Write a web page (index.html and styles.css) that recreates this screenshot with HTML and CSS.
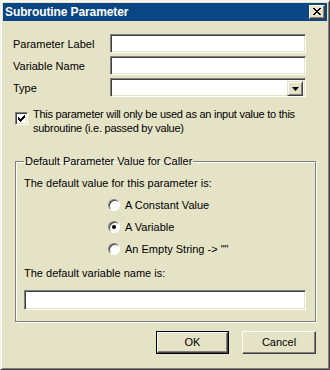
FILE: index.html
```html
<!DOCTYPE html>
<html>
<head>
<meta charset="utf-8">
<link rel="stylesheet" href="styles.css">
</head>
<body>
<div class="window">
  <div class="titlebar">
    <span class="title">Subroutine Parameter</span>
    <span class="close">
      <svg width="8" height="7" viewBox="0 0 8 7"><path d="M0 0h2v1h1v1h2V1h1V0h2v1H7v1H6v1H5v1h1v1h1v1h1v1H6V6H5V5H3v1H2v1H0V6h1V5h1V4h1V3H2V2H1V1H0z" fill="#000"/></svg>
    </span>
  </div>
  <div class="content">
    <div class="form">
      <label class="lbl">Parameter Label</label>
      <div class="field"></div>
      <label class="lbl">Variable Name</label>
      <div class="field"></div>
      <label class="lbl">Type</label>
      <div class="field select">
        <span class="dropbtn">
          <svg width="7" height="4" viewBox="0 0 7 4"><path d="M0 0h7L3.5 4z" fill="#000"/></svg>
        </span>
      </div>
    </div>
    <div class="checkrow">
      <span class="checkbox">
        <svg width="9" height="9" viewBox="0 0 9 9"><path d="M1 3h1v1h1v1h1V4h1V3h1V2h1V1h1v3H7v1H6v1H5v1H4v1H3V7H2V6H1z" fill="#000"/></svg>
      </span>
      <span class="checktext">This parameter will only be used as an input value to this<br>subroutine (i.e. passed by value)</span>
    </div>
    <fieldset class="group">
      <legend>Default Parameter Value for Caller</legend>
      <div class="line">The default value for this parameter is:</div>
      <div class="radios">
        <div class="radiorow"><span class="radio"></span><span>A Constant Value</span></div>
        <div class="radiorow"><span class="radio on"></span><span>A Variable</span></div>
        <div class="radiorow"><span class="radio"></span><span>An Empty String -&gt; ""</span></div>
      </div>
      <div class="line line2">The default variable name is:</div>
      <div class="field wide"></div>
    </fieldset>
    <div class="buttons">
      <span class="btn default"><span class="btninner">OK</span></span>
      <span class="btn"><span class="btninner">Cancel</span></span>
    </div>
  </div>
</div>
</body>
</html>
```
FILE: styles.css
```css
* { box-sizing: border-box; }
html, body { margin: 0; padding: 0; background: #e5e3c6; }
body {
  font-family: "Liberation Sans", Arial, sans-serif;
  font-size: 11px;
  line-height: 14px;
  color: #000;
}
.window {
  width: 330px;
  height: 370px;
  border: 1px solid;
  border-color: #f4f3e6 #404040 #404040 #f4f3e6;
  box-shadow: inset 1px 1px #ffffff, inset -1px -1px #808080;
  padding: 2px;
  background: #e5e3c6;
  display: flex;
  flex-direction: column;
}
.titlebar {
  height: 18px;
  background: #0a4684;
  display: flex;
  align-items: flex-start;
  justify-content: space-between;
  padding: 0 2px;
}
.title {
  color: #fff;
  font-family: "Liberation Sans", Arial, sans-serif;
  font-weight: bold;
  font-size: 12px;
  line-height: 18px;
  letter-spacing: -0.1px;
}
.close {
  margin-top: 2px;
  width: 16px;
  height: 14px;
  background: #e5e3c6;
  border: 1px solid;
  border-color: #ffffff #404040 #404040 #ffffff;
  box-shadow: inset -1px -1px #808080;
  display: flex;
  align-items: center;
  justify-content: center;
  padding-bottom: 1px;
}
.close svg { display: block; }
.content {
  padding: 13px 11px 0 10px;
  display: flex;
  flex-direction: column;
}
.form {
  display: grid;
  grid-template-columns: 97px 196px;
  grid-auto-rows: 19px;
  row-gap: 3px;
  align-items: center;
}
.field {
  height: 19px;
  background: #fff;
  border: 1px solid;
  border-color: #808080 #ffffff #ffffff #808080;
  box-shadow: inset 1px 1px #404040, inset -1px -1px #e5e3c6;
}
.select {
  display: flex;
  justify-content: flex-end;
  padding: 2px;
}
.dropbtn {
  width: 16px;
  height: 15px;
  background: #e5e3c6;
  border: 1px solid;
  border-color: #e5e3c6 #404040 #404040 #e5e3c6;
  box-shadow: inset 1px 1px #fff, inset -1px -1px #808080;
  display: flex;
  align-items: center;
  justify-content: center;
}
.dropbtn svg { display: block; }
.checkrow {
  display: flex;
  margin-top: 10px;
  margin-left: 2px;
  align-items: flex-start;
}
.checkbox {
  flex: none;
  width: 13px;
  height: 13px;
  margin-top: 5px;
  margin-right: 5px;
  background: #fff;
  border: 1px solid;
  border-color: #808080 #ffffff #ffffff #808080;
  box-shadow: inset 1px 1px #404040, inset -1px -1px #e5e3c6;
  display: flex;
  align-items: center;
  justify-content: center;
}
.checkbox svg { display: block; }
.checktext { white-space: nowrap; letter-spacing: -0.25px; }
.group {
  margin: 19px 0 0 2px;
  width: 301px;
  padding: 8px 8px 11px 8px;
  border: 1px solid #808080;
  box-shadow: inset 1px 1px #fff, 1px 1px #fff;
  min-width: 0;
}
.group legend {
  padding: 0 1px;
  margin-left: 0;
}
.line { line-height: 14px; }
.radios {
  margin-top: 4px;
  margin-left: 84px;
  display: flex;
  flex-direction: column;
}
.radiorow {
  height: 22px;
  display: flex;
  align-items: center;
  gap: 5px;
}
.radio {
  width: 12px;
  height: 12px;
  border-radius: 50%;
  background: #fff;
  border: 1px solid;
  border-color: #808080 #ffffff #ffffff #808080;
  box-shadow: inset 1px 1px #404040;
  display: flex;
  align-items: center;
  justify-content: center;
}
.radio.on::after {
  content: "";
  width: 4px;
  height: 4px;
  border-radius: 50%;
  background: #000;
}
.line2 { margin-top: 6px; }
.wide {
  width: 282px;
  height: 20px;
  margin-top: 10px;
}
.buttons {
  display: flex;
  justify-content: flex-end;
  gap: 13px;
  margin-top: 9px;
}
.btn {
  width: 74px;
  height: 23px;
  border: 1px solid;
  border-color: #ffffff #404040 #404040 #ffffff;
  box-shadow: inset -1px -1px #808080;
  display: flex;
}
.btn.default {
  width: 73px;
  border: 1px solid #000;
  box-shadow: none;
}
.btninner {
  flex: 1;
  display: flex;
  align-items: center;
  justify-content: center;
  padding-bottom: 1px;
}
.btn.default .btninner {
  border: 1px solid;
  border-color: #ffffff #404040 #404040 #ffffff;
  box-shadow: inset -1px -1px #808080;
}
```
